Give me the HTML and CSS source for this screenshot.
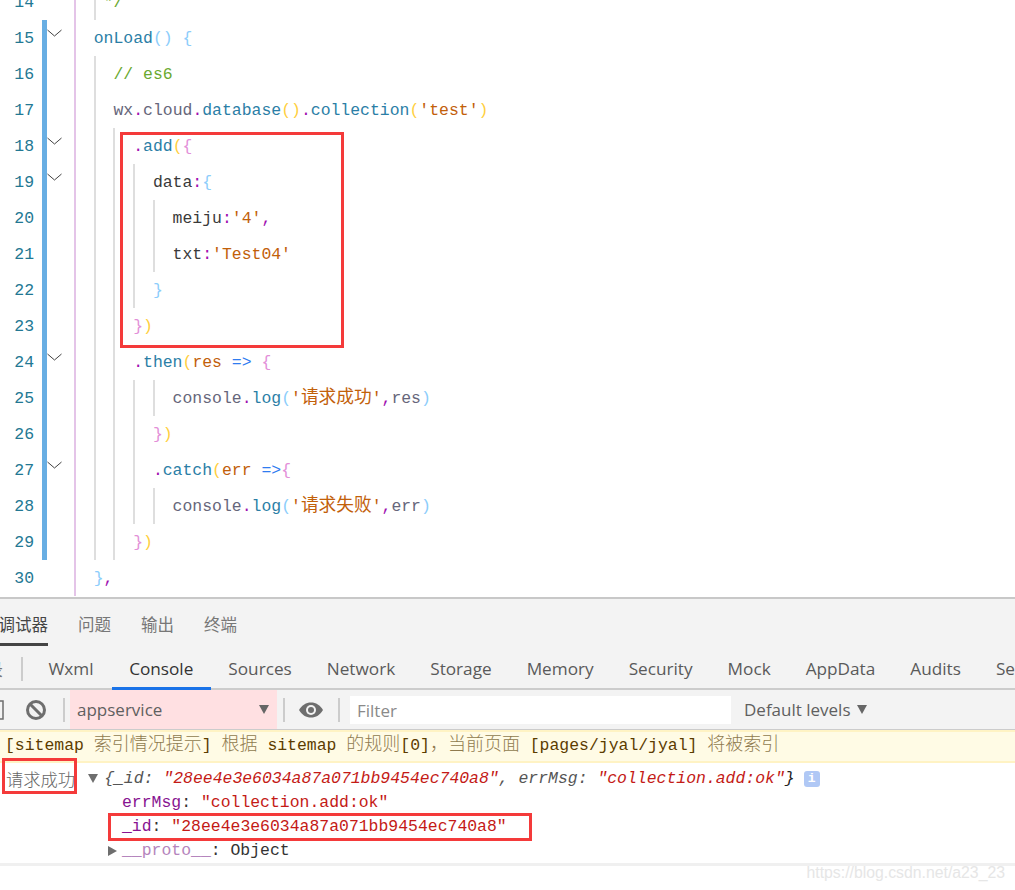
FILE: index.html
```html
<!DOCTYPE html>
<html>
<head>
	<meta charset="utf-8">
	<link rel="stylesheet" href="styles.css">
</head>
<body>
	<svg class="defs" width="0" height="0">
		<symbol id="chev" viewBox="0 0 15 36"><path d="M0.5 10L7.5 16L14.5 10" fill="none" stroke="#424242" stroke-width="1"/></symbol>
	</svg>
	<div id="editor">
		<div class="lines">
			<div class="row"><span class="num">14</span><span class="bar off"></span><span class="fold"></span><div class="code"><i class="g p"></i><i class="g half"></i><span class="t cm">*/</span></div></div>
			<div class="row"><span class="num">15</span><span class="bar"></span><span class="fold"><svg><use href="#chev"/></svg></span><div class="code"><i class="g p"></i><span class="t"><b class="fn">onLoad</b><b class="lb">() {</b></span></div></div>
			<div class="row"><span class="num">16</span><span class="bar"></span><span class="fold"></span><div class="code"><i class="g p"></i><i class="g"></i><span class="t cm">// es6</span></div></div>
			<div class="row"><span class="num">17</span><span class="bar"></span><span class="fold"></span><div class="code"><i class="g p"></i><i class="g"></i><span class="t"><b class="vr">wx</b><b class="pu">.</b><b class="vr">cloud</b><b class="pu">.</b><b class="fn">database</b><b class="yl">()</b><b class="pu">.</b><b class="fn">collection</b><b class="yl">(</b><b class="st">'test'</b><b class="yl">)</b></span></div></div>
			<div class="row"><span class="num">18</span><span class="bar"></span><span class="fold"><svg><use href="#chev"/></svg></span><div class="code"><i class="g p"></i><i class="g"></i><i class="g"></i><span class="t"><b class="pu">.</b><b class="fn">add</b><b class="yl">(</b><b class="pk">{</b></span></div></div>
			<div class="row"><span class="num">19</span><span class="bar"></span><span class="fold"><svg><use href="#chev"/></svg></span><div class="code"><i class="g p"></i><i class="g"></i><i class="g"></i><i class="g"></i><span class="t"><b class="id">data</b><b class="pu">:</b><b class="lb">{</b></span></div></div>
			<div class="row"><span class="num">20</span><span class="bar"></span><span class="fold"></span><div class="code"><i class="g p"></i><i class="g"></i><i class="g"></i><i class="g"></i><i class="g"></i><span class="t"><b class="id">meiju</b><b class="pu">:</b><b class="st">'4'</b><b class="pu">,</b></span></div></div>
			<div class="row"><span class="num">21</span><span class="bar"></span><span class="fold"></span><div class="code"><i class="g p"></i><i class="g"></i><i class="g"></i><i class="g"></i><i class="g"></i><span class="t"><b class="id">txt</b><b class="pu">:</b><b class="st">'Test04'</b></span></div></div>
			<div class="row"><span class="num">22</span><span class="bar"></span><span class="fold"></span><div class="code"><i class="g p"></i><i class="g"></i><i class="g"></i><i class="g"></i><span class="t"><b class="lb">}</b></span></div></div>
			<div class="row"><span class="num">23</span><span class="bar"></span><span class="fold"></span><div class="code"><i class="g p"></i><i class="g"></i><i class="g"></i><span class="t"><b class="pk">}</b><b class="yl">)</b></span></div></div>
			<div class="row"><span class="num">24</span><span class="bar"></span><span class="fold"><svg><use href="#chev"/></svg></span><div class="code"><i class="g p"></i><i class="g"></i><i class="g"></i><span class="t"><b class="pu">.</b><b class="fn">then</b><b class="yl">(</b><b class="st">res</b> <b class="ar">=&gt;</b> <b class="pk">{</b></span></div></div>
			<div class="row"><span class="num">25</span><span class="bar"></span><span class="fold"></span><div class="code"><i class="g p"></i><i class="g"></i><i class="g"></i><i class="g"></i><i class="g"></i><span class="t"><b class="vr">console</b><b class="pu">.</b><b class="fn">log</b><b class="lb">(</b><b class="st">'<b class="zh">请求成功</b>'</b><b class="pu">,</b><b class="vr">res</b><b class="lb">)</b></span></div></div>
			<div class="row"><span class="num">26</span><span class="bar"></span><span class="fold"></span><div class="code"><i class="g p"></i><i class="g"></i><i class="g"></i><i class="g"></i><span class="t"><b class="pk">}</b><b class="yl">)</b></span></div></div>
			<div class="row"><span class="num">27</span><span class="bar"></span><span class="fold"><svg><use href="#chev"/></svg></span><div class="code"><i class="g p"></i><i class="g"></i><i class="g"></i><i class="g"></i><span class="t"><b class="pu">.</b><b class="fn">catch</b><b class="yl">(</b><b class="st">err</b> <b class="ar">=&gt;</b><b class="pk">{</b></span></div></div>
			<div class="row"><span class="num">28</span><span class="bar"></span><span class="fold"></span><div class="code"><i class="g p"></i><i class="g"></i><i class="g"></i><i class="g"></i><i class="g"></i><span class="t"><b class="vr">console</b><b class="pu">.</b><b class="fn">log</b><b class="lb">(</b><b class="st">'<b class="zh">请求失败</b>'</b><b class="pu">,</b><b class="vr">err</b><b class="lb">)</b></span></div></div>
			<div class="row"><span class="num">29</span><span class="bar"></span><span class="fold"></span><div class="code"><i class="g p"></i><i class="g"></i><i class="g"></i><span class="t"><b class="pk">}</b><b class="yl">)</b></span></div></div>
			<div class="row"><span class="num">30</span><span class="bar off"></span><span class="fold"></span><div class="code"><i class="g p"></i><span class="t"><b class="lb">}</b><b class="pu">,</b></span></div></div>
		</div>
	</div>

	<div id="panel">
		<div class="toptabs">
			<span class="toptab active">调试器</span>
			<span class="toptab">问题</span>
			<span class="toptab">输出</span>
			<span class="toptab">终端</span>
		</div>
		<div class="tabs">
			<span class="cut">录</span>
			<span class="sep"></span>
			<span class="tab first">Wxml</span>
			<span class="tab active">Console</span>
			<span class="tab">Sources</span>
			<span class="tab">Network</span>
			<span class="tab">Storage</span>
			<span class="tab">Memory</span>
			<span class="tab">Security</span>
			<span class="tab">Mock</span>
			<span class="tab">AppData</span>
			<span class="tab">Audits</span>
			<span class="tab">Se</span>
		</div>
		<div class="toolbar">
			<svg class="ico-side" width="4" height="20" viewBox="0 0 4 20"><path d="M0 1H3V19H0" fill="none" stroke="#6e6e6e" stroke-width="1.5"/></svg>
			<svg class="ico-clear" width="22" height="22" viewBox="0 0 22 22"><circle cx="11" cy="11" r="8.5" fill="none" stroke="#6e6e6e" stroke-width="3"/><path d="M5 5L17 17" stroke="#6e6e6e" stroke-width="3"/></svg>
			<span class="sep"></span>
			<div class="context">appservice<span class="tri"></span></div>
			<span class="sep"></span>
			<svg class="ico-eye" width="26" height="16" viewBox="0 0 26 16"><path d="M1 8C4 3 8 .5 13 .5S22 3 25 8C22 13 18 15.5 13 15.5S4 13 1 8Z" fill="#6e6e6e"/><circle cx="13" cy="8" r="5" fill="#f3f3f3"/><circle cx="13" cy="8" r="3" fill="#6e6e6e"/></svg>
			<span class="sep"></span>
			<div class="filter">Filter</div>
			<div class="levels">Default levels<span class="tri"></span></div>
		</div>
		<div class="msg warn">[sitemap <span class="zh">索引情况提示</span>] <span class="zh">根据</span> sitemap <span class="zh">的规则</span>[0]<span class="zh">，当前页面</span> [pages/jyal/jyal] <span class="zh">将被索引</span></div>
		<div class="log">
			<div class="log-head">
				<span class="log-label">请求成功</span>
				<span class="arrow down"></span>
				<span class="sum">{_id: <b class="red">"28ee4e3e6034a87a071bb9454ec740a8"</b>, errMsg: <b class="red">"collection.add:ok"</b><em>}</em></span>
				<span class="info">i</span>
			</div>
			<div class="prop"><b class="key">errMsg</b>: <b class="red">"collection.add:ok"</b></div>
			<div class="prop"><b class="key">_id</b>: <b class="red">"28ee4e3e6034a87a071bb9454ec740a8"</b></div>
			<div class="prop"><span class="arrow right"></span><b class="key dim">__proto__</b>: Object</div>
		</div>
		<div class="blank"></div>
	</div>

	<div class="mark-box box1"></div>
	<div class="mark-box box2"></div>
	<div class="mark-box box3"></div>
	<div class="watermark">https://blog.csdn.net/a23_23</div>
</body>
</html>
```

FILE: styles.css
```css
html, body {
	margin: 0;
	height: 890px;
	overflow: hidden;
	background: #fff;
}
.defs {
	position: absolute;
}

/* editor */
#editor {
	height: 597px;
	overflow: hidden;
	font-family: "Liberation Mono", "Noto Sans CJK SC", monospace;
	font-size: 16.45px;
}
.lines {
	margin-top: -16px;
}
.row {
	display: flex;
	height: 36px;
	line-height: 38px;
}
.num {
	width: 34px;
	text-align: right;
	color: #237893;
}
.bar {
	width: 5px;
	margin-left: 8px;
	background: #68aee3;
}
.bar.off {
	background: none;
}
.fold {
	width: 15px;
	margin-right: 12px;
}
.fold svg {
	display: block;
	width: 15px;
	height: 36px;
}
.code {
	display: flex;
}
.g {
	width: 2ch;
	box-sizing: border-box;
	border-left: 2px solid #dedede;
}
.g.half {
	width: 1ch;
}
.g.p {
	border-left-color: #e4c4e8;
}
.t {
	white-space: pre;
}
.t b {
	font-weight: normal;
}
.t .zh {
	font-size: 17.7px;
}
.cm { color: #6aa92f; }
.fn { color: #2b7ea6; }
.lb { color: #8ccdfb; }
.yl { color: #ffcf40; }
.pk { color: #e38fd8; }
.st { color: #c2600a; }
.pu { color: #a010b0; }
.vr { color: #66667a; }
.id { color: #3a3a3a; }
.ar { color: #2f7cf0; }

/* debugger panel */
#panel {
	height: 293px;
	box-sizing: border-box;
	border-top: 2px solid #c8c8c8;
	background: #f3f3f3;
	font-family: "Open Sans", "Noto Sans CJK SC", sans-serif;
	overflow: hidden;
}
.toptabs {
	display: flex;
	gap: 30px;
	height: 50px;
	margin-left: -1.5px;
}
.toptab {
	height: 47px;
	font-family: "Noto Sans CJK SC", sans-serif;
	font-size: 16.5px;
	line-height: 50px;
	color: #777;
	box-sizing: border-box;
}
.toptab.active {
	color: #444;
	border-bottom: 3px solid #444;
}
.tabs {
	display: flex;
	align-items: center;
	height: 41px;
	box-sizing: border-box;
	border-bottom: 2px solid #ccc;
	white-space: nowrap;
}
.cut {
	margin-left: -14px;
	font-family: "Noto Sans CJK SC", sans-serif;
	font-size: 17px;
	color: #777;
}
.sep {
	flex: none;
	width: 2px;
	height: 24px;
	background: #ccc;
}
.tabs .sep {
	margin-left: 18px;
	margin-right: 8px;
}
.tab {
	align-self: stretch;
	padding: 0 17.5px;
	font-size: 17.2px;
	line-height: 40px;
	color: #5a5a5a;
}
.tab.first {
	margin-right: 0.5px;
}
.tab.active {
	color: #333;
	box-shadow: inset 0 -3px 0 #1a73e8;
	margin-bottom: -2px;
}
.toolbar {
	display: flex;
	align-items: center;
	height: 39px;
	border-bottom: 1px solid #ccc;
	font-size: 17px;
	color: #5f5f5f;
}
.ico-side {
	margin-right: 21px;
}
.ico-clear {
	margin-right: 16px;
}
.context {
	align-self: stretch;
	display: flex;
	align-items: center;
	justify-content: space-between;
	width: 207px;
	box-sizing: border-box;
	margin: 0 6px 0 5px;
	padding: 0 8px 0 7px;
	background: #ffe0e2;
}
.tri {
	width: 0;
	height: 0;
	border-left: 5px solid transparent;
	border-right: 5px solid transparent;
	border-top: 9px solid #666;
}
.ico-eye {
	margin: 0 14px 0 13px;
}
.filter {
	width: 374px;
	height: 28px;
	margin-left: 10px;
	padding-left: 7px;
	background: #fff;
	line-height: 30px;
	color: #8a8a8a;
}
.levels {
	display: flex;
	align-items: center;
	gap: 6px;
	margin-left: 13px;
}

/* console */
.msg, .log {
	font-family: "Liberation Mono", "Noto Sans CJK SC", monospace;
	font-size: 16.45px;
}
.msg.warn {
	height: 33px;
	box-sizing: border-box;
	padding-left: 5px;
	border-top: 2px solid #fff3c4;
	border-bottom: 2px solid #fff3c4;
	background: #fffbe5;
	color: #5c3c00;
	line-height: 28px;
	white-space: pre;
}
.zh {
	font-family: "Noto Sans CJK SC", sans-serif;
	font-weight: 300;
	line-height: 0;
}
.msg .zh {
	font-size: 18px;
	color: #8f7a4e;
}
.log {
	height: 103px;
	box-sizing: border-box;
	background: #fff;
	border-bottom: 3px solid #f0f0f0;
	color: #333;
}
.log b {
	font-weight: normal;
}
.log-head {
	display: flex;
	align-items: center;
	height: 25px;
	padding-top: 3px;
	white-space: pre;
}
.log-label {
	margin-left: 6px;
	font-family: "Noto Sans CJK SC", sans-serif;
	font-size: 17.3px;
	font-weight: 300;
	color: #666;
}
.arrow {
	flex: none;
	width: 0;
	height: 0;
}
.arrow.down {
	margin-left: 13px;
	margin-right: 6px;
	border-left: 5px solid transparent;
	border-right: 5px solid transparent;
	border-top: 9px solid #6e6e6e;
}
.arrow.right {
	position: absolute;
	margin-left: -14px;
	margin-top: 7px;
	border-top: 5px solid transparent;
	border-bottom: 5px solid transparent;
	border-left: 9px solid #6e6e6e;
}
.sum {
	font-style: italic;
	color: #555;
}
.sum em {
	color: #222;
}
.red {
	color: #c41a16;
}
.info {
	width: 16px;
	height: 16px;
	margin-left: 9px;
	border-radius: 3px;
	background: #b0c8f5;
	color: #fff;
	font-size: 13px;
	font-weight: bold;
	line-height: 16px;
	text-align: center;
}
.prop {
	height: 24px;
	padding-left: 122px;
	line-height: 24px;
	white-space: pre;
}
.key {
	color: #881391;
}
.key.dim {
	color: #b585bd;
}
.blank {
	height: 30px;
	background: #fff;
}

/* annotations over the screenshot */
.mark-box {
	position: absolute;
	box-sizing: border-box;
	border: 3px solid #f43a3a;
}
.box1 {
	left: 120px;
	top: 132px;
	width: 224px;
	height: 216px;
}
.box2 {
	left: 2px;
	top: 758px;
	width: 75px;
	height: 36px;
}
.box3 {
	left: 108px;
	top: 813px;
	width: 424px;
	height: 28px;
}
.watermark {
	position: absolute;
	right: 10px;
	top: 864px;
	font-family: "Liberation Sans", sans-serif;
	font-size: 15.8px;
	color: #e6e6e6;
}
```
